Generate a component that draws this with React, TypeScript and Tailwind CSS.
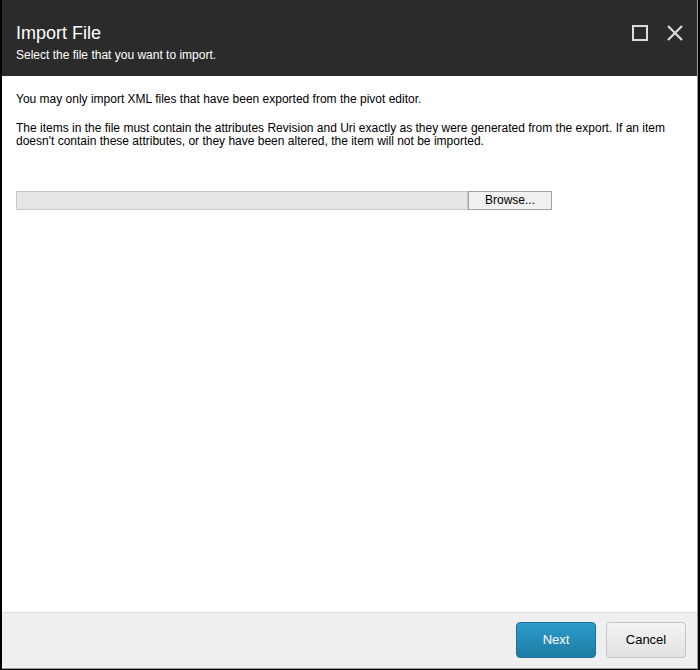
export default function App() {
  return (
    <div className="w-[700px] h-[670px] bg-black p-[2px] pt-0 pb-[1px] font-['Liberation_Sans',Arial,sans-serif]">
      <div className="flex h-full flex-col bg-white border-r border-b border-[#9a9a9a]">
        {/* Header */}
        <header className="flex h-[76px] shrink-0 items-start justify-between bg-[#2b2b2b] pl-[14px] pr-[13px]">
          <div className="pt-[22px]">
            <h1 className="text-[18px] leading-[22px] text-white">Import File</h1>
            <p className="mt-[4px] text-[12px] leading-[14px] text-white">Select the file that you want to import.</p>
          </div>
          <div className="flex items-center gap-[17px] pt-[24px]">
            <svg width="18" height="18" viewBox="0 0 18 18">
              <rect x="2" y="2" width="14" height="14" fill="none" stroke="#dcdcdc" strokeWidth="2" />
            </svg>
            <svg width="18" height="18" viewBox="0 0 18 18">
              <path d="M2 2 L16 16 M16 2 L2 16" stroke="#dcdcdc" strokeWidth="2.2" />
            </svg>
          </div>
        </header>

        {/* Body */}
        <main className="flex-1 px-[14px] pt-[17px] text-[12px] leading-[13px] text-black">
          <p>You may only import XML files that have been exported from the pivot editor.</p>
          <p className="mt-[16px]">
            The items in the file must contain the attributes Revision and Uri exactly as they were generated from the export. If an item
            doesn't contain these attributes, or they have been altered, the item will not be imported.
          </p>
          <div className="mt-[43px] flex h-[19px]">
            <div className="w-[452px] border border-[#c8c8c8] bg-[#e6e6e6]" />
            <button className="w-[84px] border border-[#a0a0a0] bg-[#f0f0f0] text-[12px] leading-[17px] text-black">Browse...</button>
          </div>
        </main>

        {/* Footer */}
        <footer className="flex h-[56px] shrink-0 items-start justify-end gap-[10px] border-t border-[#dddddd] bg-[#efefef] pr-[11px] pt-[9px]">
          <button className="h-[36px] w-[80px] rounded-[4px] border border-[#1d7198] bg-gradient-to-b from-[#2b9ccb] to-[#1f7ca4] text-[13px] text-white">
            Next
          </button>
          <button className="h-[36px] w-[80px] rounded-[4px] border border-[#c4c4c4] bg-gradient-to-b from-[#f4f4f4] to-[#e2e2e2] text-[13px] text-black">
            Cancel
          </button>
        </footer>
      </div>
    </div>
  );
}
